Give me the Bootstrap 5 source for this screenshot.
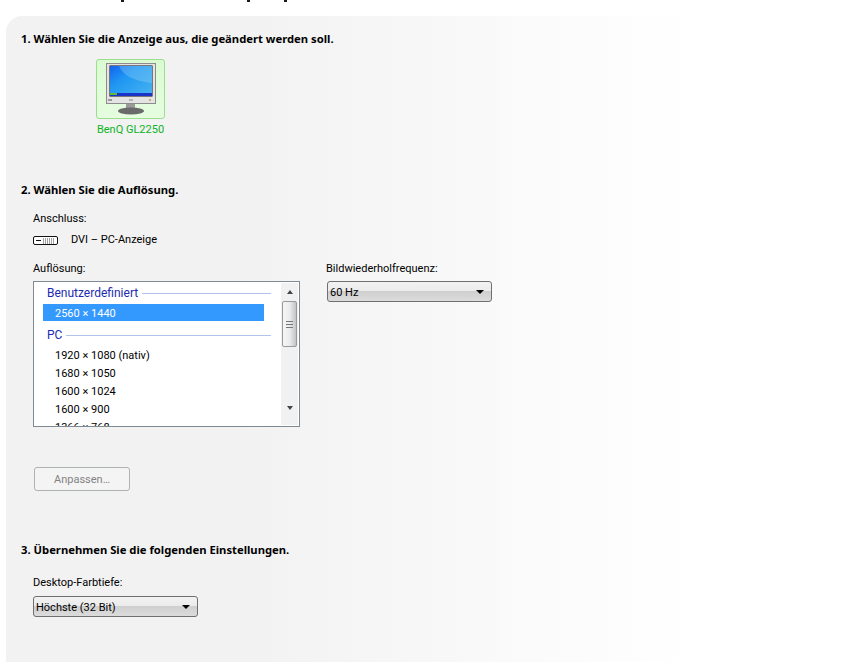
<!DOCTYPE html>
<html lang="de">
<head>
<meta charset="utf-8">
<title>Bildschirmauflösung</title>
<link href="https://cdn.jsdelivr.net/npm/bootstrap@5.3.0/dist/css/bootstrap.min.css" rel="stylesheet">
<style>
html,body{height:662px;overflow:hidden;background:#fff}
body{font-family:Roboto,"Liberation Sans",sans-serif;font-size:11px;line-height:14px;color:#000}
.top-cut{height:16px;padding-left:121px}
.cut-mark{display:block;width:3px;height:2px;background:#1a1a1a}
.cut-a{margin-right:123px}
.cut-b{margin-right:34px}
.panel-area{margin-left:6px;height:646px;background:linear-gradient(90deg,#f2f2f2 0,#f2f2f2 240px,#fafafa 500px,#fff 690px);border-top-left-radius:16px;padding:16px 0 0 15px}
.step-title{font-family:"Noto Sans","Liberation Sans",sans-serif;font-weight:700;font-size:11.25px;line-height:14px;margin:0}
.mon-tile{width:69px;height:60px;margin:13px 0 0 75px;background:linear-gradient(#dafbd2,#e6fde0);border:1px solid #9ade8e;border-radius:3px}
.mon-name{width:69px;margin:4px 0 0 75px;text-align:center;color:#0cb41e;line-height:14px;white-space:nowrap;font-size:11px}
.step-two{margin-top:46px}
.step-three{margin-top:52px}
.indent{padding-left:12px}
.conn-label{margin-top:15px}
.conn-row{margin-top:7px;height:14px}
.conn-row span{margin-left:12px}
.res-row{margin-top:15px;gap:26px}
.col-res{width:267px}
.col-rate{width:166px}
.field-label{line-height:14px;margin-bottom:5px;white-space:nowrap}
.listbox{height:146px;background:#fff;border:1px solid #7f8a93;overflow:hidden}
.lb-body{padding:2px 0 0 9px;width:230px}
.lb-group{color:#1c2bb0;font-size:12px;height:18px;line-height:18px;padding-left:4px;gap:4px}
.lb-group i{height:1px;background:#b4c3ec;margin-right:-7px}
.lb-sel{background:#3399ff;color:#fff;height:17px;line-height:19px;padding-left:12px;margin:2px 0 5px;width:221px}
.lb-item{height:18px;line-height:20px;padding-left:12px;white-space:nowrap}
.lb-first{margin-top:2px}
.sbar{width:17px;height:142px;margin:1px 1px 0 0;background:#f1f1f1;padding-top:7px}
.sb-up,.sb-down{width:0;height:0;border-left:3.5px solid transparent;border-right:3.5px solid transparent}
.sb-up{border-bottom:4px solid #444}
.sb-down{border-top:4px solid #444;margin-top:59px}
.sb-thumb{margin-top:7px;width:15px;height:46px;border:1px solid #9a9a9a;border-radius:2px;background:linear-gradient(90deg,#f6f6f6,#ececec 50%,#c4c4c4)}
.sb-grip{width:7px;height:7px;border-top:1px solid #777;border-bottom:1px solid #777;background:linear-gradient(#fff0 2px,#777 2px,#777 3px,#fff0 3px)}
.dd{height:21px;background:linear-gradient(#f2f2f2,#ebebeb 45%,#cfcfcf 50%,#dcdcdc);border:1px solid #6f6f6f;border-radius:3px;padding:0 7px 0 2px}
.dd span{padding-top:2px}
.dd b{width:0;height:0;border-left:4px solid transparent;border-right:4px solid transparent;border-top:4px solid #000}
.dd-rate{margin-left:1px;width:165px}
.dd-depth{width:165px;margin-top:6px}
.adapt-wrap{margin:40px 0 0 1px}
.btn.adapt{width:96px;height:24px;border:1px solid #adb2b5;border-radius:3px;background:#f4f4f4;color:#838383;line-height:24px;font-size:11px;padding:0;opacity:1}
.depth-label{margin:19px 0 0}
</style>
</head>
<body>
<div class="top-cut d-flex"><span class="cut-mark cut-a"></span><span class="cut-mark cut-b"></span><span class="cut-mark"></span></div>
<div class="panel-area">
  <p class="step-title">1. Wählen Sie die Anzeige aus, die geändert werden soll.</p>
  <div class="mon-tile d-flex align-items-center justify-content-center">
    <svg width="52" height="54" viewBox="0 0 52 54" aria-hidden="true">
      <defs><linearGradient id="scr" x1="0" y1="0" x2="1" y2="1"><stop offset="0" stop-color="#1560f0"/><stop offset=".35" stop-color="#1e96f2"/><stop offset="1" stop-color="#48b4f0"/></linearGradient></defs>
      <rect x="1.5" y="1.5" width="49" height="40" fill="#e4e4e4" stroke="#8c8c8c"/>
      <rect x="4.5" y="3.5" width="43" height="31" fill="#0a0a0a"/>
      <rect x="5" y="4" width="42" height="30" fill="url(#scr)"/>
      <path d="M14 4c4 9 14 15 33 17V4z" fill="#a6ddf7" opacity=".3"/>
      <rect x="5" y="31" width="42" height="3" fill="#1a34c8"/>
      <rect x="5" y="31" width="7" height="2" fill="#62bb34"/>
      <rect x="3" y="37" width="4" height="2" fill="#9a9a9a"/>
      <rect x="24" y="37" width="4" height="2" fill="#b5b5b5"/>
      <rect x="44" y="37" width="2" height="2" fill="#c8b070"/>
      <rect x="21" y="42" width="9" height="5" fill="#9b9b9b"/>
      <ellipse cx="26" cy="49" rx="13" ry="3.5" fill="#6a6a6a"/>
    </svg>
  </div>
  <div class="mon-name">BenQ GL2250</div>

  <p class="step-title step-two">2. Wählen Sie die Auflösung.</p>
  <div class="indent">
    <div class="field-label conn-label mb-0">Anschluss:</div>
    <div class="conn-row d-flex align-items-center">
      <svg width="26" height="9" viewBox="0 0 26 9" aria-hidden="true"><rect x=".5" y=".5" width="24" height="8" rx="1.5" fill="#fff" stroke="#111"/><rect x="3" y="4" width="5" height="1" fill="#111"/><path d="M10 3h12M10 5h12M10 7h12" stroke="#444" stroke-dasharray="1 1"/></svg>
      <span>DVI – PC-Anzeige</span>
    </div>
    <div class="res-row d-flex">
      <div class="col-res">
        <div class="field-label">Auflösung:</div>
        <div class="listbox d-flex justify-content-between">
          <div class="lb-body">
            <div class="lb-group d-flex align-items-center">Benutzerdefiniert<i class="flex-grow-1"></i></div>
            <div class="lb-sel">2560 × 1440</div>
            <div class="lb-group d-flex align-items-center">PC<i class="flex-grow-1"></i></div>
            <div class="lb-item lb-first">1920 × 1080 (nativ)</div>
            <div class="lb-item">1680 × 1050</div>
            <div class="lb-item">1600 × 1024</div>
            <div class="lb-item">1600 × 900</div>
            <div class="lb-item">1366 × 768</div>
          </div>
          <div class="sbar d-flex flex-column align-items-center">
            <div class="sb-up"></div>
            <div class="sb-thumb d-flex align-items-center justify-content-center"><div class="sb-grip"></div></div>
            <div class="sb-down"></div>
          </div>
        </div>
      </div>
      <div class="col-rate">
        <div class="field-label">Bildwiederholfrequenz:</div>
        <div class="dd dd-rate d-flex align-items-center justify-content-between"><span>60 Hz</span><b></b></div>
      </div>
    </div>
    <div class="adapt-wrap"><button type="button" class="btn adapt" disabled>Anpassen…</button></div>
  </div>

  <p class="step-title step-three">3. Übernehmen Sie die folgenden Einstellungen.</p>
  <div class="indent">
    <div class="field-label depth-label">Desktop-Farbtiefe:</div>
    <div class="dd dd-depth d-flex align-items-center justify-content-between"><span>Höchste (32 Bit)</span><b></b></div>
  </div>
</div>
</body>
</html>
